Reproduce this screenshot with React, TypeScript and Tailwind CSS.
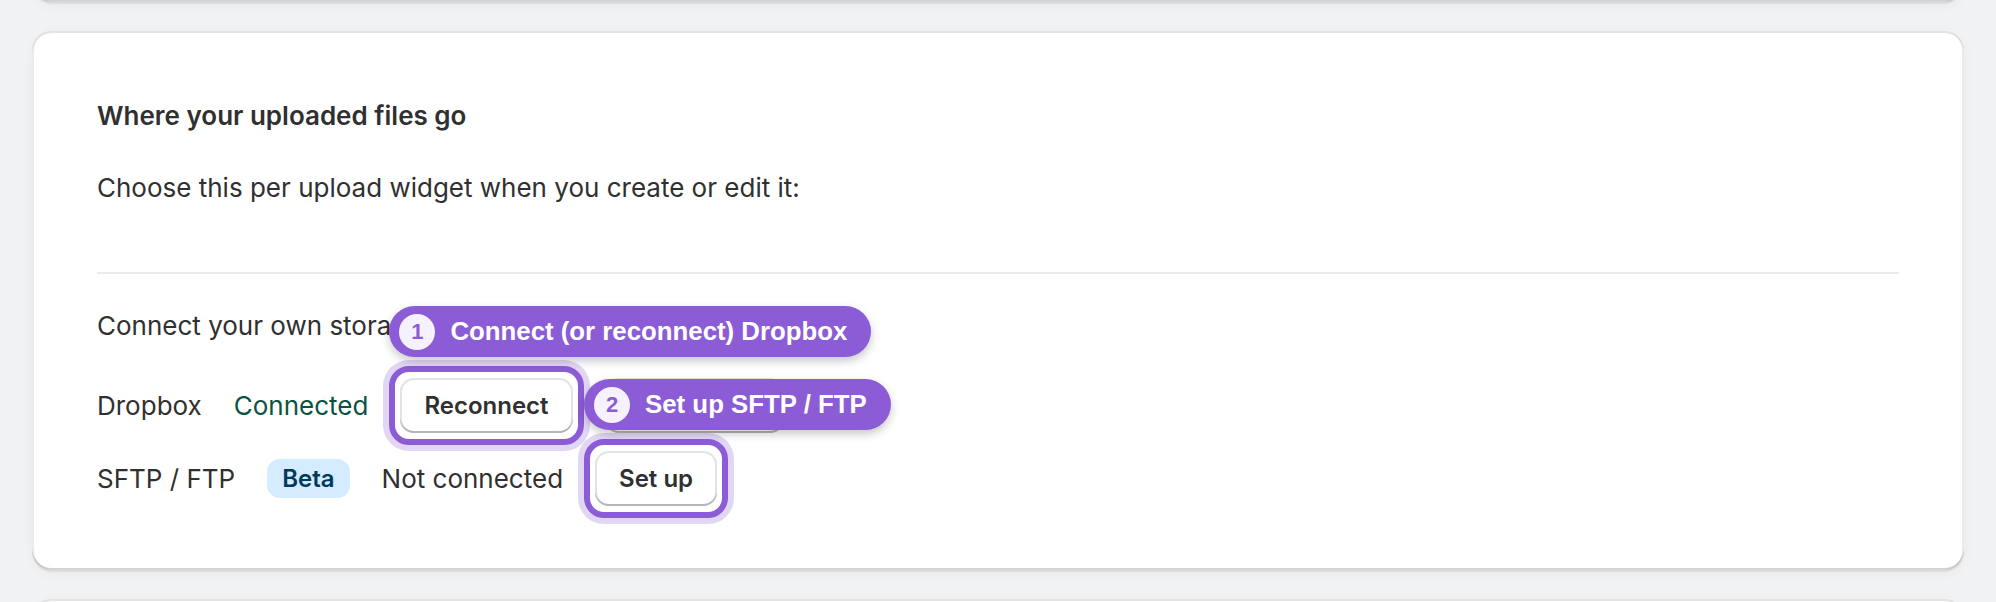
import React from 'react';

type SpotlightProps = {
  step: number;
  label: string;
  children: React.ReactNode;
};

// Wraps a control with a purple focus frame and a numbered callout pill above it
const Spotlight: React.FC<SpotlightProps> = ({ step, label, children }) => {
  return (
    <div className="relative">
      {children}
      <div className="pointer-events-none absolute -inset-x-[11px] -inset-y-[12px] rounded-[20px] border-[6px] border-[#8b5cd6] ring-[6px] ring-[#8b5cd6]/25" />
      <div className="absolute left-[-11px] bottom-[calc(100%+21px)] z-10 flex h-[51px] items-center gap-[15px] whitespace-nowrap rounded-full bg-[#8b5cd6] pl-[10px] pr-6 font-['Liberation_Sans',Arial,sans-serif] shadow-[0_4px_10px_rgba(0,0,0,0.22)]">
        <span className="flex h-9 w-9 items-center justify-center rounded-full bg-[#f6f1fe] text-[22px] font-bold text-[#8b5cd6]">
          {step}
        </span>
        <span className="text-[25.8px] font-bold text-white">{label}</span>
      </div>
    </div>
  );
};

const Button: React.FC<{ children: React.ReactNode }> = ({ children }) => (
  <button className="flex h-[55px] items-center rounded-[14px] bg-white px-6 text-[24px] font-semibold text-[#303030] shadow-[inset_0_-2px_0_#b5b5b5,inset_0_0_0_2px_#e3e3e3]">
    {children}
  </button>
);

const cardShadow =
  'shadow-[0_2px_0_rgba(26,26,26,0.07),0_4px_12px_rgba(0,0,0,0.04),inset_0_2px_0_rgba(204,204,204,0.5),inset_2px_0_0_rgba(0,0,0,0.08),inset_-2px_0_0_rgba(0,0,0,0.08),inset_0_-2px_0_rgba(0,0,0,0.17)]';

export default function App() {
  return (
    <div className="h-[602px] overflow-hidden bg-[#f1f2f4] px-8 font-['Inter',sans-serif] text-[#303030]">
      <div className="flex flex-col gap-[29px]">
        {/* tail of the card above */}
        <div className={`-mt-[100px] h-[102px] rounded-b-[20px] bg-white ${cardShadow}`} />

        <section className={`rounded-[20px] bg-white px-[65px] pt-[65px] pb-[64px] ${cardShadow}`}>
          <h2 className="text-[26px] font-semibold leading-[40px]">Where your uploaded files go</h2>
          <p className="mt-[34px] text-[26px] leading-[36px]">
            Choose this per upload widget when you create or edit it:
          </p>

          <div className="mt-[66px] h-[2px] bg-[#ebebeb]" />

          <p className="mt-[34px] text-[26px] leading-[36px]">Connect your own storage:</p>

          {/* Dropbox */}
          <div className="mt-[34px] flex h-[55px] items-center gap-8 text-[26px]">
            <span>Dropbox</span>
            <span className="text-[#0b5340]">Connected</span>
            <Spotlight step={1} label="Connect (or reconnect) Dropbox">
              <Button>Reconnect</Button>
            </Spotlight>
            <Button>Disconnect</Button>
          </div>

          {/* SFTP / FTP */}
          <div className="mt-[18px] flex h-[55px] items-center gap-8 text-[26px]">
            <span>SFTP / FTP</span>
            <span className="flex h-[39px] items-center rounded-[13px] bg-[#d5ebff] px-[15px] text-[24px] font-semibold text-[#003a5a]">
              Beta
            </span>
            <span>Not connected</span>
            <Spotlight step={2} label="Set up SFTP / FTP">
              <Button>Set up</Button>
            </Spotlight>
          </div>
        </section>

        <div className={`h-[200px] rounded-t-[20px] bg-white ${cardShadow}`} />
      </div>
    </div>
  );
}
